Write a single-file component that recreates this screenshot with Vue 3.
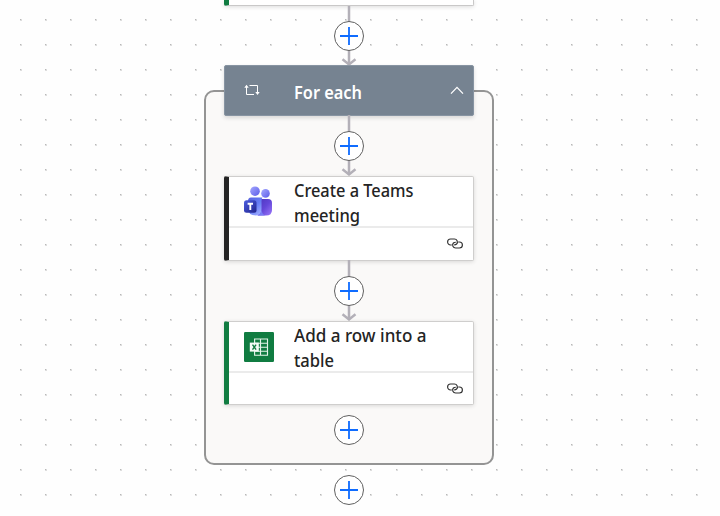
<script setup>
const actions = [
  { id: 'teams', lines: ['Create a Teams', 'meeting'], widths: [119.5, 66], accent: 'black' },
  { id: 'excel', lines: ['Add a row into a', 'table'], widths: [132.5, 40], accent: 'green' },
]
const columns = Array.from({ length: 28 }, (_, i) => 20 + Math.round(i * 25.035))
const rows = Array.from({ length: 20 }, (_, i) => 19 + i * 25)
</script>

<template>
  <main class="canvas">
    <svg class="dots" width="720" height="516" shape-rendering="crispEdges" aria-hidden="true">
      <g v-for="y in rows" :key="y">
        <g v-for="x in columns" :key="x">
          <rect :x="x" :y="y" width="2" height="2" fill="#dedede" />
          <rect :x="x" :y="y" width="1" height="1" fill="#b8b8b8" />
        </g>
      </g>
    </svg>

    <div class="flow">
      <div class="previous"></div>

      <div class="connector first">
        <svg class="edge" width="16" height="60" viewBox="0 0 16 60"><path d="M8 0V58M1.5 53.2L8 58.4L14.5 53.2" /></svg>
        <button class="add" aria-label="Add step"><svg width="20" height="20" viewBox="0 0 20 20"><path d="M10 1V19M1 10H19" /></svg></button>
      </div>

      <section class="scope">
        <header class="scope-header">
          <svg class="loop" width="16" height="12" viewBox="0 0 16 12">
            <path d="M2.5 2V10.5H10M5.5 1.5H13.5V9.5" />
            <path class="tip" d="M0.3 3.8L2.5 0.8L4.7 3.8ZM11.3 8L13.5 11L15.7 8Z" />
          </svg>
          <svg class="scope-title" width="100" height="28"><text x="0" y="21" textLength="68" lengthAdjust="spacingAndGlyphs">For each</text></svg>
          <svg class="chevron" width="14" height="9" viewBox="0 0 14 9"><path d="M1 7.6L7 1.4L13 7.6" /></svg>
        </header>

        <template v-for="(action, index) in actions" :key="action.id">
          <div class="connector" :class="{ long: index === 1 }">
            <svg class="edge" width="16" height="60" viewBox="0 0 16 60"><path d="M8 -1V58M1.5 53.2L8 58.4L14.5 53.2" /></svg>
            <button class="add" aria-label="Add step"><svg width="20" height="20" viewBox="0 0 20 20"><path d="M10 1V19M1 10H19" /></svg></button>
          </div>
          <article class="card" :class="action.accent">
            <div class="card-main">
              <svg v-if="action.id === 'teams'" class="logo" width="30" height="30" viewBox="0 0 30 30">
                <defs>
                  <linearGradient id="head" x1="0" y1="0" x2="1" y2="1"><stop stop-color="#a5a8ff" /><stop offset="1" stop-color="#5b5ce8" /></linearGradient>
                  <linearGradient id="rear" x1="0" y1="0" x2="1" y2="1"><stop stop-color="#4c35bd" /><stop offset=".5" stop-color="#6346d8" /><stop offset="1" stop-color="#9c78fa" /></linearGradient>
                  <linearGradient id="front" x1="0" y1="0" x2=".7" y2="1"><stop stop-color="#5761df" /><stop offset=".55" stop-color="#667df5" /><stop offset="1" stop-color="#9aa9ff" /></linearGradient>
                  <linearGradient id="badge" x1="0" y1="0" x2="1" y2="1"><stop stop-color="#4c5ee0" /><stop offset="1" stop-color="#20228c" /></linearGradient>
                </defs>
                <circle cx="21.5" cy="7.4" r="4.3" fill="url(#head)" />
                <circle cx="11" cy="5.2" r="4.8" fill="url(#head)" />
                <path d="M14 13H24Q28 13 28 17V24Q28 29.5 22 29.5H14Z" fill="url(#rear)" />
                <path d="M7 11.5H18.5Q17.5 12.5 17.5 15V23Q17.5 29.5 12 29.5Q4 29.5 4 22V15Q4 11.5 7 11.5Z" fill="url(#front)" />
                <path d="M17.5 19V23Q17.5 28 13 29.5H21Q18 28 17.5 24Z" fill="#777cf5" />
                <rect x="0" y="14.3" width="12.5" height="12.5" rx="2.5" fill="url(#badge)" />
                <path d="M3.6 17.8H9M6.3 17.8V24" fill="none" stroke="#fff" stroke-width="1.9" />
              </svg>
              <svg v-else class="logo excel" width="30" height="30" viewBox="0 0 30 30">
                <rect width="30" height="30" rx="1.2" fill="#107c41" />
                <path d="M10.6 7H23.5V23.2H10.6ZM16.5 7V23.2M10.6 11.2H23.5M10.6 15.2H23.5M10.6 19.2H23.5" fill="none" stroke="#e3f3e9" stroke-width="1.15" />
                <rect x="5.8" y="10.6" width="9" height="9" fill="#f4fbf7" />
                <path d="M8.5 12.7L12.1 17.7M12.1 12.7L8.5 17.7" stroke="#107c41" stroke-width="1.4" />
              </svg>
              <svg class="card-title" width="170" height="50">
                <text v-for="(line, i) in action.lines" :key="line" x="0" :y="20 + i * 25" :textLength="action.widths[i]" lengthAdjust="spacingAndGlyphs">{{ line }}</text>
              </svg>
            </div>
            <footer class="card-footer">
              <svg width="16" height="11" viewBox="0 0 16 11">
                <path d="M4.8 7H3.6A3 3 0 0 1 3.6 1H7.4A3 3 0 0 1 9.6 6Q8.8 6.8 7.2 6.8" />
                <path d="M11.2 4H12.4A3 3 0 0 1 12.4 10H8.6A3 3 0 0 1 6.4 5Q7.2 4.2 8.8 4.2" />
              </svg>
            </footer>
          </article>
        </template>
        <button class="add inner-add" aria-label="Add step"><svg width="20" height="20" viewBox="0 0 20 20"><path d="M10 1V19M1 10H19" /></svg></button>
      </section>
      <button class="add last-add" aria-label="Add step"><svg width="20" height="20" viewBox="0 0 20 20"><path d="M10 1V19M1 10H19" /></svg></button>
    </div>
  </main>
</template>

<style>
body { margin: 0; overflow: hidden; background: #fff; }
</style>

<style scoped>
.canvas { position: relative; width: 720px; height: 516px; overflow: hidden; background: #fefefe; font-family: "Segoe UI", "Noto Sans", sans-serif; }
.canvas *, .canvas { box-sizing: border-box; }
svg { display: block; flex: none; }
.dots { position: absolute; inset: 0; }
.flow { position: relative; width: 290px; margin-left: 204px; display: flex; flex-direction: column; align-items: center; }
.previous { width: 250px; height: 5.5px; border: 1px solid #c9c8c8; border-top: 0; border-left: 5px solid #107c41; border-radius: 0 0 2px 2px; background: #fff; box-shadow: 0 1px 4px #0002; }
.connector { display: grid; justify-items: center; height: 60px; width: 30px; flex: none; }
.connector > * { grid-area: 1 / 1; }
.connector .add { margin-top: 15px; }
.connector.first { height: 84.5px; }
.connector.long { height: 60.5px; }
.edge { overflow: visible; }
.edge path { fill: none; stroke: #b3b0b8; stroke-width: 2.5; }
.add { display: flex; align-items: center; justify-content: center; flex: none; width: 30px; height: 30px; padding: 0; border: 1px solid #606060; border-radius: 50%; background: #fff; z-index: 1; }
.add path { fill: none; stroke: #0f6cff; stroke-width: 1.8; }
.scope { display: flex; flex-direction: column; align-items: center; width: 290px; height: 375px; flex: none; border: 2px solid #949494; border-radius: 10px; background: #faf9f8; }
.scope-header { display: flex; align-items: center; flex: none; width: 250px; height: 51px; margin-top: -27px; padding: 0 9px 0 19px; border: 1px solid #8794a2; border-radius: 2px; background: #768391; box-shadow: 0 2px 4px #0002; }
.loop path { fill: none; stroke: #fff; stroke-width: 1; }
.loop .tip { fill: #fff; stroke: none; }
.loop { margin-bottom: 1px; }
.scope-title { margin-left: 34px; margin-top: 2px; }
.scope-title text { fill: #fff; font-size: 18px; font-weight: 600; }
.chevron { margin-left: auto; }
.chevron path { fill: none; stroke: #fff; stroke-width: 1.3; }
.card { width: 250px; height: 84.5px; flex: none; border: 1px solid #cfcecd; border-left: 5px solid #242424; border-radius: 2px; background: #fff; box-shadow: 0 1px 4px #0002; }
.card.green { border-left-color: #107c41; height: 84px; }
.card-main { display: flex; height: 51px; border-bottom: 2px solid #ebebeb; padding-left: 15px; }
.logo { margin-top: 9px; }
.logo.excel { margin-top: 9.5px; }
.card-title { margin-left: 20px; }
.card-title text { fill: #242424; font-size: 18px; font-weight: 500; }
.card-footer { height: 31px; display: flex; align-items: center; justify-content: flex-end; padding-right: 10.5px; }
.card-footer path { fill: none; stroke: #303030; stroke-width: 1.15; }
.inner-add { margin-top: 10px; }
.last-add { margin-top: 10px; }
</style>
